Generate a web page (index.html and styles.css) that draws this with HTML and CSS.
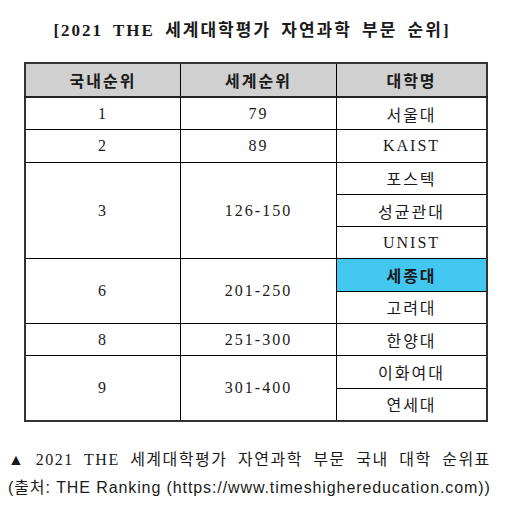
FILE: index.html
```
<!DOCTYPE html>
<html lang="ko">
<head>
<meta charset="utf-8">
<link rel="stylesheet" href="styles.css">
</head>
<body>
<div class="page">
  <h1 class="title">[2021 THE 세계대학평가 자연과학 부문 순위]</h1>
  <table class="rank">
    <thead>
      <tr><th>국내순위</th><th>세계순위</th><th>대학명</th></tr>
    </thead>
    <tbody>
      <tr><td>1</td><td>79</td><td>서울대</td></tr>
      <tr><td>2</td><td>89</td><td>KAIST</td></tr>
      <tr><td rowspan="3">3</td><td rowspan="3">126-150</td><td>포스텍</td></tr>
      <tr><td>성균관대</td></tr>
      <tr><td>UNIST</td></tr>
      <tr><td rowspan="2">6</td><td rowspan="2">201-250</td><td class="hl">세종대</td></tr>
      <tr><td>고려대</td></tr>
      <tr><td>8</td><td>251-300</td><td>한양대</td></tr>
      <tr><td rowspan="2">9</td><td rowspan="2">301-400</td><td>이화여대</td></tr>
      <tr><td>연세대</td></tr>
    </tbody>
  </table>
  <div class="caption">
    <p class="line one">▲ 2021 THE 세계대학평가 자연과학 부문 국내 대학 순위표</p>
    <p class="line two">(출처: THE Ranking (https://www.timeshighereducation.com))</p>
  </div>
</div>
</body>
</html>
```
FILE: styles.css
```
html, body {
  margin: 0;
  padding: 0;
  background: #ffffff;
}
.page {
  width: 512px;
  font-family: "Liberation Serif", "Noto Sans CJK KR", serif;
  color: #1a1a1a;
}
.title {
  margin: 0;
  padding-top: 22px;
  height: 40px;
  box-sizing: border-box;
  text-align: center;
  font-size: 17px;
  line-height: 18px;
  font-weight: bold;
  letter-spacing: 2px;
  word-spacing: 4px;
  transform: translateX(-4px);
}
.rank {
  margin: 22px 0 0 24px;
  width: 464px;
  border-collapse: collapse;
  border: 2px solid #333333;
  table-layout: fixed;
}
.rank th, .rank td {
  border: 1px solid #000000;
  text-align: center;
  padding: 0;
  font-size: 16px;
  font-weight: normal;
  letter-spacing: 2px;
}
.rank th {
  background: #d0d0d0;
  height: 32px;
  font-weight: bold;
  border-bottom: 2px solid #222222;
}
.rank td {
  height: 31.3px;
}
.rank th:nth-child(1) { width: 154px; }
.rank th:nth-child(2) { width: 155px; }
.rank td.hl {
  background: #41c7f0;
  font-weight: bold;
}
.caption {
  margin-top: 24px;
  padding: 0 0 0 8px;
}
.line {
  margin: 0;
  font-size: 16px;
  line-height: 28px;
  white-space: nowrap;
}
.one {
  letter-spacing: 1.5px;
  word-spacing: 5px;
}
.two {
  font-family: "Liberation Sans", "Noto Sans CJK KR", sans-serif;
  font-size: 16px;
  letter-spacing: 0.9px;
}
```
